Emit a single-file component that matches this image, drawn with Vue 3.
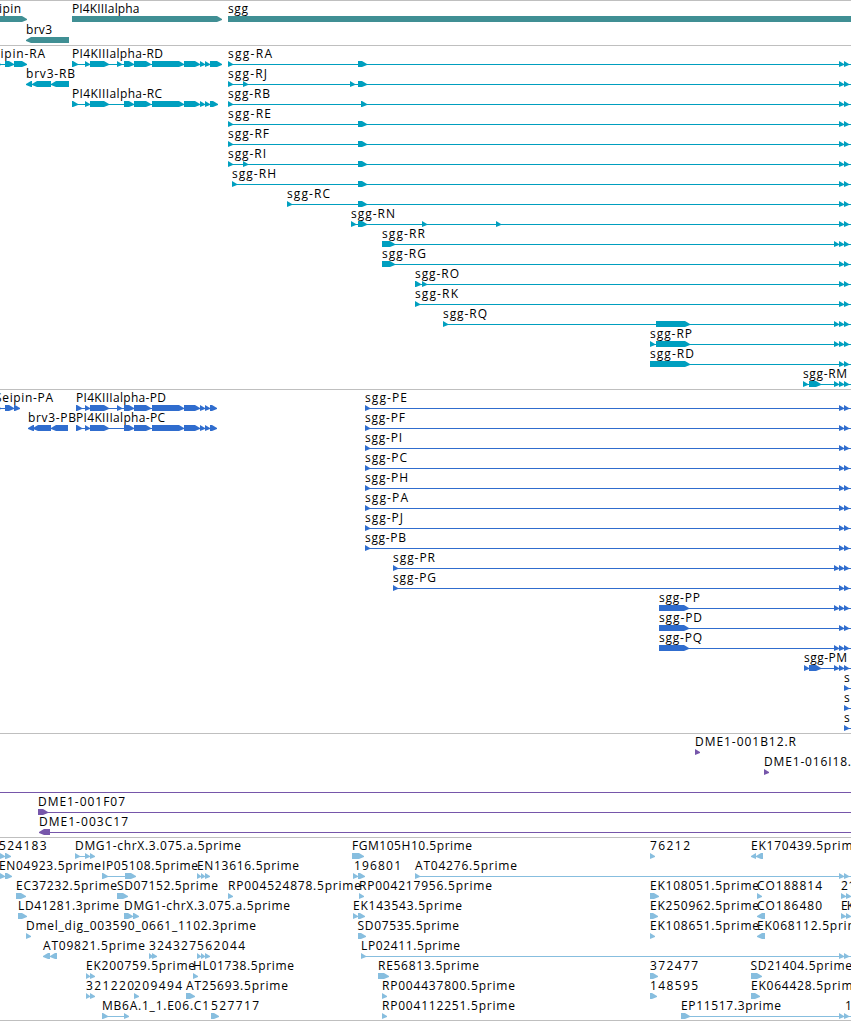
<template>
  <main class="browser">
    <section
      v-for="track in tracks"
      :key="track.name"
      class="track"
      :class="`track-${track.name}`"
    >
      <svg
        v-for="(row, i) in track.rows"
        :key="i"
        class="row"
        width="851"
        :height="track.name === 'genes' ? 21 : 20"
      >
        <rect
          v-for="([start, end], n) in row.lines"
          :key="`line-${n}`"
          :x="start"
          y="18"
          :width="end - start"
          height="1"
        />
        <polygon
          v-for="(feature, n) in row.features"
          :key="`feature-${n}`"
          :points="arrow(feature)"
        />
        <text
          v-for="([label, start, end], n) in row.labels"
          :key="`label-${n}`"
          :x="start"
          y="12"
          :textLength="end - start"
        >{{ label }}</text>
      </svg>
    </section>
  </main>
</template>

<script setup>
const HEAD = 5
const EDGE = 851

// [start, end] points right, [start, end, -1] points left
const arrow = ([start, end, strand = 1]) => {
  const head = Math.min(HEAD, end - start)
  if (strand < 0) {
    return `${end},15 ${start + head},15 ${start},18 ${start},19 ${start + head},21 ${end},21`
  }
  return `${start},15 ${end - head},15 ${end},18 ${end},19 ${end - head},21 ${start},21`
}

const row = (labels, features = [], lines = []) => ({ labels, features, lines })

const pair = [[839, 844], [844, 849]]
const triple = [[834, 839], ...pair]

// one sgg isoform: its label, then exons on an intron line that leaves the view
const sgg = (name, start, width, exons, tail = pair) =>
  row([[`sgg-${name}`, start, start + width]], [...exons, ...tail], [[start, EDGE]])

const piExons = [[85, 90], [90, 109], [124, 134], [134, 151], [152, 184], [184, 200], [200, 205], [205, 210]]

const geneRows = [
  row(
    [['Seipin', -15, 21], ['PI4KIIIalpha', 72, 139.5], ['sgg', 228, 248]],
    [[-20, 27], [72, 222], [228, 870]]
  ),
  row([['brv3', 26, 52]], [[26, 69, -1]]),
]

const transcriptRows = [
  row(
    [['Seipin-RA', -14.5, 45], ['PI4KIIIalpha-RD', 72, 163], ['sgg-RA', 228, 272]],
    [[-5, 1], [5, 14], [14, 27], [72, 78], [117, 122], ...piExons, [210, 222], [228, 233], [358, 367], ...pair],
    [[0, 20], [72, 218], [228, EDGE]]
  ),
  row(
    [['brv3-RB', 26, 75], ['sgg-RJ', 228, 267]],
    [[26, 32, -1], [32, 51, -1], [51, 69, -1], [228, 233], [243, 248], [350, 355], [358, 367], ...pair],
    [[30, 69], [228, EDGE]]
  ),
  row(
    [['PI4KIIIalpha-RC', 72, 162], ['sgg-RB', 228, 270]],
    [[72, 78], ...piExons, [210, 218], [228, 233], [361, 367], ...pair],
    [[72, 214], [228, EDGE]]
  ),
  sgg('RE', 228, 43, [[228, 233], [358, 367]]),
  sgg('RF', 228, 41, [[228, 233], [358, 367]]),
  sgg('RI', 228, 38, [[228, 233], [243, 248], [358, 367]]),
  sgg('RH', 232, 44, [[232, 237], [358, 367]]),
  sgg('RC', 287, 43, [[287, 292], [358, 367]]),
  sgg('RN', 351, 44, [[351, 356], [358, 367], [422, 427], [496, 501]]),
  sgg('RR', 382, 43, [[382, 395]], triple),
  sgg('RG', 382, 44, [[382, 395]]),
  sgg('RO', 415, 44, [[415, 421], [422, 427]]),
  sgg('RK', 415, 43, [[415, 420]]),
  sgg('RQ', 443, 44, [[443, 448], [656, 690]], triple),
  sgg('RP', 650, 42, [[650, 655], [656, 690]], triple),
  sgg('RD', 650, 44, [[650, 690]]),
  sgg('RM', 803, 44, [[803, 808], [809, 821]], triple),
]

const proteinRows = [
  row(
    [['Seipin-PA', -5, 53], ['PI4KIIIalpha-PD', 76, 166], ['sgg-PE', 365, 407]],
    [[-5, 1], [5, 14], [14, 20], [76, 82], [117, 122], ...piExons, [210, 217], [365, 370], ...pair],
    [[0, 18], [76, 214], [365, EDGE]]
  ),
  row(
    [['brv3-PB', 28, 76], ['PI4KIIIalpha-PC', 76, 165], ['sgg-PF', 365, 405]],
    [[28, 34, -1], [33, 51, -1], [51, 68, -1], [76, 82], ...piExons, [210, 217], [365, 370], ...pair],
    [[30, 68], [76, 214], [365, EDGE]]
  ),
  sgg('PI', 365, 37, [[365, 370]]),
  sgg('PC', 365, 42, [[365, 370]]),
  sgg('PH', 365, 43, [[365, 370]]),
  sgg('PA', 365, 43, [[365, 370]]),
  sgg('PJ', 365, 38, [[365, 370]]),
  sgg('PB', 365, 41, [[365, 370]]),
  sgg('PR', 393, 42, [[393, 398]], triple),
  sgg('PG', 393, 43, [[393, 398]]),
  sgg('PP', 659, 41, [[659, 689]], triple),
  sgg('PD', 659, 43, [[659, 689]]),
  sgg('PQ', 659, 43, [[659, 689]], triple),
  sgg('PM', 804, 43, [[804, 809], [809, 821]], triple),
  row([['s', 844, 850]], [[844, 849]], [[844, EDGE]]),
  row([['s', 844, 850]], [[844, 849]], [[844, EDGE]]),
  row([['s', 844, 850]], [[844, 849]], [[844, EDGE]]),
]

const cloneRows = [
  row([['DME1-001B12.R', 695, 796]], [[695, 700]]),
  row([['DME1-016I18.', 764, 851]], [[764, 769]]),
  row([], [], [[0, EDGE]]),
  row([['DME1-001F07', 38, 125]], [[38, 48]], [[38, EDGE]]),
  row([['DME1-003C17', 39, 128]], [[39, 50, -1]], [[39, EDGE]]),
]

const estRows = [
  row(
    [
      ['524183', -1, 46.5],
      ['DMG1-chrX.3.075.a.5prime', 75, 241],
      ['FGM105H10.5prime', 352, 472],
      ['76212', 650, 690],
      ['EK170439.5prime', 751, 860],
    ],
    [[0, 5], [5, 11], [75, 80], [85, 90], [90, 95], [352, 364], [650, 655], [751, 756, -1], [756, 763, -1]],
    [[0, 8], [75, 93]]
  ),
  row(
    [
      ['EN04923.5prime', -1, 101],
      ['IP05108.5prime', 102, 198],
      ['EN13616.5prime', 197, 299],
      ['196801', 354, 401],
      ['AT04276.5prime', 415, 517],
    ],
    [[0, 5], [5, 12], [102, 108], [125, 136], [197, 201], [201, 205], [205, 210], [353, 358], [358, 365], [415, 420], ...pair],
    [[0, 8], [102, 136], [197, 208], [353, 362], [415, EDGE]]
  ),
  row(
    [
      ['EC37232.5prime', 16, 117],
      ['SD07152.5prime', 117, 218],
      ['RP004524878.5prime', 228, 361],
      ['RP004217956.5prime', 359, 492],
      ['EK108051.5prime', 650, 759],
      ['CO188814', 757, 822],
      ['21', 841, 855],
    ],
    [[16, 26], [117, 128], [228, 233], [359, 364], [650, 659], [757, 762], [841, 846], [846, 851]]
  ),
  row(
    [
      ['LD41281.3prime', 18, 119],
      ['DMG1-chrX.3.075.a.5prime', 124, 290],
      ['EK143543.5prime', 353, 462],
      ['EK250962.5prime', 650, 759],
      ['CO186480', 757, 822],
      ['EK', 841, 854],
    ],
    [[18, 27], [124, 133], [133, 139], [353, 358], [358, 365], [650, 658], [757, 765, -1], [841, 846], [846, 851]],
    [[124, 136], [353, 362]]
  ),
  row(
    [
      ['Dmel_dig_003590_0661_1102.3prime', 26, 256],
      ['SD07535.5prime', 357.5, 459],
      ['EK108651.5prime', 650, 759],
      ['EK068112.5prime', 757, 866],
    ],
    [[26, 31], [358, 366], [650, 655], [757, 765, -1]]
  ),
  row(
    [
      ['AT09821.5prime', 43, 145],
      ['324327', 149, 196],
      ['562044', 197, 245],
      ['LP02411.5prime', 361, 460],
    ],
    [[43, 50, -1], [50, 57, -1], [149, 153], [152, 157], [197, 201], [201, 205], [205, 210], [361, 366], ...pair],
    [[46, 56], [197, 208], [361, EDGE]]
  ),
  row(
    [
      ['EK200759.5prime', 86, 195],
      ['HL01738.5prime', 193, 294],
      ['RE56813.5prime', 378, 479],
      ['372477', 650, 698],
      ['SD21404.5prime', 750.5, 852],
    ],
    [[86, 90], [90, 95], [193, 198], [378, 389], [650, 658], [751, 762]],
    [[86, 94]]
  ),
  row(
    [
      ['321220', 86, 134],
      ['209494', 134, 182],
      ['AT25693.5prime', 186, 288],
      ['RP004437800.5prime', 382, 515],
      ['148595', 650, 698],
      ['EK064428.5prime', 751, 860],
    ],
    [[86, 90], [90, 95], [134, 139], [186, 195], [382, 387], [650, 657], [751, 760]],
    [[86, 94]]
  ),
  row(
    [
      ['MB6A.1_1.E06.C1', 102, 209],
      ['527717', 211, 259],
      ['RP004112251.5prime', 382, 515],
      ['EP11517.3prime', 681, 781],
      ['1', 845, 852],
    ],
    [[102, 108], [124, 129], [211, 219], [382, 387], [681, 690], ...pair],
    [[102, 129], [681, EDGE]]
  ),
]

const tracks = [
  { name: 'genes', rows: geneRows },
  { name: 'transcripts', rows: transcriptRows },
  { name: 'proteins', rows: proteinRows },
  { name: 'clones', rows: cloneRows },
  { name: 'ests', rows: estRows },
]
</script>

<style>
body {
  margin: 0;
  background: #ffffff;
}
</style>

<style scoped>
.browser {
  width: 851px;
  height: 1021px;
  overflow: hidden;
  background: #ffffff;
}

.track {
  display: flex;
  flex-direction: column;
  border-top: 1px solid #bfbfbf;
  padding-bottom: 3px;
}

/* glyphs hang one pixel below their row */
.row {
  display: block;
  flex: none;
  overflow: visible;
}

.row text {
  font-family: 'Open Sans', 'Noto Sans', sans-serif;
  font-size: 12px;
  fill: #000000;
}

.track-genes {
  fill: #408f94;
  padding-bottom: 2px;
}

.track-transcripts {
  fill: #009fbf;
}

.track-proteins {
  fill: #306dce;
}

.track-clones {
  fill: #7656aa;
}

.track-ests {
  fill: #87bedf;
  padding-bottom: 2px;
  border-bottom: 1px solid #bfbfbf;
}
</style>
